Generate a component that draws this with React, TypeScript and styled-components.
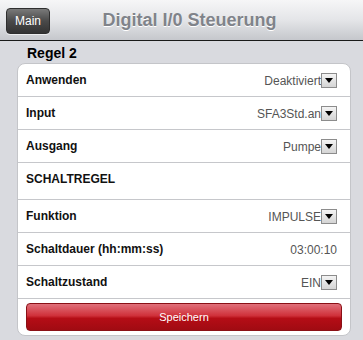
import React from "react";
import styled, { createGlobalStyle } from "styled-components";

const GlobalStyle = createGlobalStyle`
  html, body {
    margin: 0;
    padding: 0;
    background: #d9dadf;
    font-family: "Liberation Sans", Arial, sans-serif;
  }
`;

type Row = {
  label: string;
  value?: string;
  select?: boolean;
  heading?: boolean;
};

const rows: Row[] = [
  { label: "Anwenden", value: "Deaktiviert", select: true },
  { label: "Input", value: "SFA3Std.an", select: true },
  { label: "Ausgang", value: "Pumpe", select: true },
  { label: "SCHALTREGEL", heading: true },
  { label: "Funktion", value: "IMPULSE", select: true },
  { label: "Schaltdauer (hh:mm:ss)", value: "03:00:10" },
  { label: "Schaltzustand", value: "EIN", select: true },
];

export default function App() {
  return (
    <Page>
      <GlobalStyle />
      <Header>
        <BackButton>Main</BackButton>
        <Title>Digital I/0 Steuerung</Title>
      </Header>
      <Content>
        <SectionTitle>Regel 2</SectionTitle>
        <Card>
          {rows.map((row) => (
            <ListRow key={row.label} $heading={row.heading}>
              <Label>{row.label}</Label>
              {row.value && (
                <ValueWrap>
                  <Value>{row.value}</Value>
                  {row.select && (
                    <DropBox>
                      <svg width="8" height="5" viewBox="0 0 8 5">
                        <path d="M0 0 L8 0 L4 5 Z" fill="#000" />
                      </svg>
                    </DropBox>
                  )}
                </ValueWrap>
              )}
            </ListRow>
          ))}
          <ButtonRow>
            <SaveButton>Speichern</SaveButton>
          </ButtonRow>
        </Card>
      </Content>
    </Page>
  );
}

const Page = styled.div`
  width: 363px;
  height: 340px;
  overflow: hidden;
  background: #d9dadf;
`;

const Header = styled.div`
  height: 40px;
  border-bottom: 1px solid #1a1a1a;
  background: linear-gradient(#f6f6f7, #e4e5e8 50%, #c5c7cc);
  display: flex;
  align-items: center;
  position: relative;
  padding-left: 6px;
`;

const BackButton = styled.div`
  width: 44px;
  height: 26px;
  box-sizing: border-box;
  border-radius: 4px;
  background: linear-gradient(#7a7a7a, #4a4a4a 50%, #333);
  border: 1px solid #2e2e2e;
  box-shadow: 0 1px 0 rgba(255, 255, 255, 0.6);
  color: #fff;
  font-size: 12px;
  display: flex;
  align-items: center;
  justify-content: center;
  margin-top: 1px;
`;

const Title = styled.div`
  position: absolute;
  left: 0;
  right: 0;
  top: 0;
  height: 40px;
  line-height: 40px;
  text-align: center;
  font-size: 18px;
  font-weight: bold;
  color: #80838a;
  text-shadow: 0 1px 0 #fff;
  pointer-events: none;
  padding-left: 16px;
`;

const Content = styled.div`
  padding: 3px 12px 0 17px;
`;

const SectionTitle = styled.div`
  font-size: 14px;
  font-weight: bold;
  color: #000;
  padding-left: 10px;
  height: 19px;
  line-height: 19px;
`;

const Card = styled.div`
  width: 334px;
  background: #fff;
  border: 1px solid #c4c5c9;
  border-radius: 8px;
  box-sizing: border-box;
`;

const ListRow = styled.div<{ $heading?: boolean }>`
  height: ${(p) => (p.$heading ? 37 : 33)}px;
  border-bottom: 1px solid #c6c7cb;
  box-sizing: border-box;
  display: flex;
  align-items: center;
  justify-content: space-between;
  padding: 0 13px 0 8px;
  padding-bottom: ${(p) => (p.$heading ? 4 : 1)}px;
`;

const Label = styled.div`
  font-size: 12px;
  font-weight: bold;
  color: #111;
`;

const ValueWrap = styled.div`
  display: flex;
  align-items: center;
  margin-top: 2px;
`;

const Value = styled.div`
  font-size: 12px;
  color: #555;
`;

const DropBox = styled.div`
  width: 16px;
  height: 15px;
  box-sizing: border-box;
  border: 1px solid #8c8c8c;
  background: linear-gradient(#f4f4f4, #d4d4d4);
  display: flex;
  align-items: center;
  justify-content: center;
`;

const ButtonRow = styled.div`
  padding: 4px 8px 4px 8px;
`;

const SaveButton = styled.div`
  height: 26px;
  border-radius: 4px;
  border: 1px solid #8a1016;
  background: linear-gradient(#e0707a, #d0303a 45%, #b50d16 55%, #a00b12);
  color: #fff;
  font-size: 11px;
  display: flex;
  align-items: center;
  justify-content: center;
`;
